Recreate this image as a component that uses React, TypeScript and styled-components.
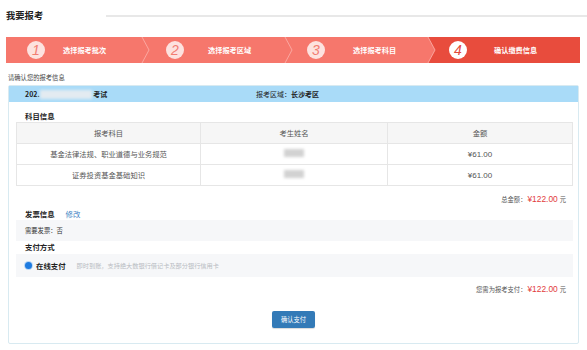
import React from "react";
import styled, { createGlobalStyle } from "styled-components";

const Global = createGlobalStyle`
  html, body { margin: 0; padding: 0; background: #fff; }
  body { font-family: "Noto Sans CJK SC", "Noto Sans", "Liberation Sans", sans-serif; color: #333; }
  * { box-sizing: border-box; }
`;

const Page = styled.div`
  width: 587px;
  height: 350px;
  padding: 0 6px;
  overflow: hidden;
`;

const TitleRow = styled.div`
  height: 32px;
  display: flex;
  align-items: center;
`;

const Title = styled.h1`
  margin: 0;
  font-size: 9.3px;
  font-weight: 700;
  color: #222;
  line-height: 1;
`;

const TitleLine = styled.div`
  flex: 1;
  height: 2px;
  margin-left: 63px;
  margin-right: -6px;
  background: #e8e8e8;
`;

const StepBar = styled.div`
  margin-top: 5px;
  height: 26px;
  display: flex;
`;

const Step = styled.div<{ $w: number; $active?: boolean; $pad: number; $gap: number; $z: number }>`
  position: relative;
  width: ${(p) => p.$w}px;
  height: 26px;
  background: ${(p) => (p.$active ? "#e84c3d" : "#f6776c")};
  display: flex;
  align-items: center;
  padding-left: ${(p) => p.$pad}px;
  gap: ${(p) => p.$gap}px;
  z-index: ${(p) => p.$z};
`;

const Circle = styled.span<{ $active?: boolean }>`
  width: 18px;
  height: 18px;
  border-radius: 50%;
  background: ${(p) => (p.$active ? "#ffffff" : "#fde2df")};
  color: ${(p) => (p.$active ? "#e24a3c" : "#f27d72")};
  display: flex;
  align-items: center;
  justify-content: center;
  font-family: "Liberation Sans", sans-serif;
  font-size: 14px;
  font-weight: 400;
  font-style: italic;
  line-height: 1;
  flex: none;
`;

const StepText = styled.span`
  color: #fff;
  font-size: 7.2px;
  font-weight: 700;
  white-space: nowrap;
`;

const Tip = styled.svg`
  position: absolute;
  right: -7px;
  top: 0;
  width: 7px;
  height: 26px;
  overflow: visible;
`;

const Hint = styled.div`
  margin-top: 9px;
  margin-left: 2px;
  font-size: 6.3px;
  color: #444;
  height: 12px;
  line-height: 12px;
`;

const Box = styled.div`
  margin-left: 2px;
  width: 571px;
  margin-top: 1px;
  border: 1px solid #d8eaf1;
  border-radius: 2px;
  padding-bottom: 15px;
`;

const BoxHead = styled.div`
  height: 16px;
  background: #a9dbf8;
  display: flex;
  align-items: center;
  font-size: 7px;
  color: #222;
`;

const HeadLeft = styled.div`
  width: 247px;
  padding-left: 16px;
  display: flex;
  align-items: center;
  font-weight: 700;
`;

const Blur = styled.span<{ $w: number; $h: number; $c: string }>`
  display: inline-block;
  width: ${(p) => p.$w}px;
  height: ${(p) => p.$h}px;
  background: ${(p) => p.$c};
  filter: blur(1.5px);
`;

const HeadRight = styled.div`
  b { font-weight: 700; }
`;

const Body = styled.div`
  padding: 0 5px 0 7px;
`;

const Label = styled.div<{ $top: number }>`
  margin-top: ${(p) => p.$top}px;
  height: 12px;
  line-height: 12px;
  padding-left: 9px;
  font-size: 7.4px;
  font-weight: 700;
  color: #222;
  display: flex;
  gap: 11px;
`;

const EditLink = styled.span`
  font-weight: 400;
  color: #3d7fc4;
`;

const Table = styled.table`
  width: 100%;
  border-collapse: collapse;
  font-size: 7.3px;
  color: #555;
`;

const Th = styled.th<{ $w?: number }>`
  height: 21px;
  background: #f6f6f6;
  border: 1px solid #e6e6e6;
  font-weight: 400;
  width: ${(p) => (p.$w ? `${p.$w}px` : "auto")};
`;

const Td = styled.td`
  height: 21px;
  border: 1px solid #e6e6e6;
  text-align: center;
  padding: 0;
`;

const Money = styled.span`
  font-family: "Liberation Sans", sans-serif;
  font-size: 8px;
`;

const SumRow = styled.div<{ $top: number }>`
  margin-top: ${(p) => p.$top}px;
  height: 12px;
  display: flex;
  justify-content: flex-end;
  align-items: center;
  padding-right: 7px;
  font-size: 6.3px;
  color: #555;
`;

const Red = styled.span`
  color: #e23b3b;
  font-family: "Liberation Sans", sans-serif;
  font-size: 8.4px;
  margin: 0 2px 0 1px;
`;

const Gray = styled.div<{ $h: number; $top?: number }>`
  height: ${(p) => p.$h}px;
  margin-top: ${(p) => p.$top ?? 0}px;
  background: #f6f7f9;
  display: flex;
  align-items: center;
  padding-left: 9px;
  font-size: 6.3px;
  color: #333;
  gap: 4px;
`;

const Radio = styled.span`
  width: 7px;
  height: 7px;
  border-radius: 50%;
  background: #1e7be0;
  box-shadow: 0 0 0 1px #b9d6f5;
  margin-left: 0;
  margin-right: 0;
  flex: none;
`;

const PayName = styled.span`
  font-size: 7.4px;
  font-weight: 700;
  color: #222;
  margin-right: 7px;
`;

const PayDesc = styled.span`
  font-size: 6.2px;
  color: #b8bcc2;
`;

const BtnWrap = styled.div`
  display: flex;
  justify-content: center;
  margin-top: 16px;
`;

const Button = styled.button`
  width: 43px;
  height: 17px;
  border: none;
  border-radius: 2px;
  background: #337ab7;
  color: #fff;
  font-family: inherit;
  font-size: 6.3px;
  padding: 0;
  box-shadow: 0 1px 1px rgba(0,0,0,0.15);
`;

const steps = [
  { n: "1", t: "选择报考批次", w: 136, pad: 21, gap: 18 },
  { n: "2", t: "选择报考区域", w: 143, pad: 24, gap: 24 },
  { n: "3", t: "选择报考科目", w: 143, pad: 22, gap: 28 },
  { n: "4", t: "确认缴费信息", w: 152, pad: 21, gap: 27 },
];

export default function App() {
  return (
    <Page>
      <Global />
      <TitleRow>
        <Title>我要报考</Title>
        <TitleLine />
      </TitleRow>
      <StepBar>
        {steps.map((s, i) => {
          const active = i === 3;
          return (
            <Step key={s.n} $w={s.w} $active={active} $pad={s.pad} $gap={s.gap} $z={10 - i}>
              <Circle $active={active}>{s.n}</Circle>
              <StepText>{s.t}</StepText>
              {i < 3 && (
                <Tip viewBox="0 0 7 26">
                  <polygon points="0,0 7,13 0,26" fill="#f6776c" />
                  <polyline points="0,0 7,13 0,26" fill="none" stroke="#fbb3ac" strokeWidth="0.8" />
                </Tip>
              )}
            </Step>
          );
        })}
      </StepBar>
      <Hint>请确认您的报考信息</Hint>
      <Box>
        <BoxHead>
          <HeadLeft>
            202.
            <Blur $w={52} $h={9} $c="#e3ebf1" />
            &nbsp;考试
          </HeadLeft>
          <HeadRight>
            报考区域：<b>长沙考区</b>
          </HeadRight>
        </BoxHead>
        <Body>
          <Label $top={8}>科目信息</Label>
          <Table>
            <thead>
              <tr>
                <Th $w={184}>报考科目</Th>
                <Th $w={187}>考生姓名</Th>
                <Th>金额</Th>
              </tr>
            </thead>
            <tbody>
              <tr>
                <Td>基金法律法规、职业道德与业务规范</Td>
                <Td><Blur $w={20} $h={8} $c="#d2d2d2" /></Td>
                <Td><Money>¥61.00</Money></Td>
              </tr>
              <tr>
                <Td>证券投资基金基础知识</Td>
                <Td><Blur $w={20} $h={8} $c="#d2d2d2" /></Td>
                <Td><Money>¥61.00</Money></Td>
              </tr>
            </tbody>
          </Table>
          <SumRow $top={7}>
            总金额：<Red>¥122.00</Red>元
          </SumRow>
          <Label $top={3}>
            发票信息<EditLink>修改</EditLink>
          </Label>
          <Gray $h={21}>需要发票：否</Gray>
          <Label $top={0}>支付方式</Label>
          <Gray $h={23} $top={1}>
            <Radio />
            <PayName>在线支付</PayName>
            <PayDesc>即时到账，支持绝大数银行借记卡及部分银行信用卡</PayDesc>
          </Gray>
          <SumRow $top={6}>
            您需为报考支付：<Red>¥122.00</Red>元
          </SumRow>
        </Body>
        <BtnWrap>
          <Button>确认支付</Button>
        </BtnWrap>
      </Box>
    </Page>
  );
}
